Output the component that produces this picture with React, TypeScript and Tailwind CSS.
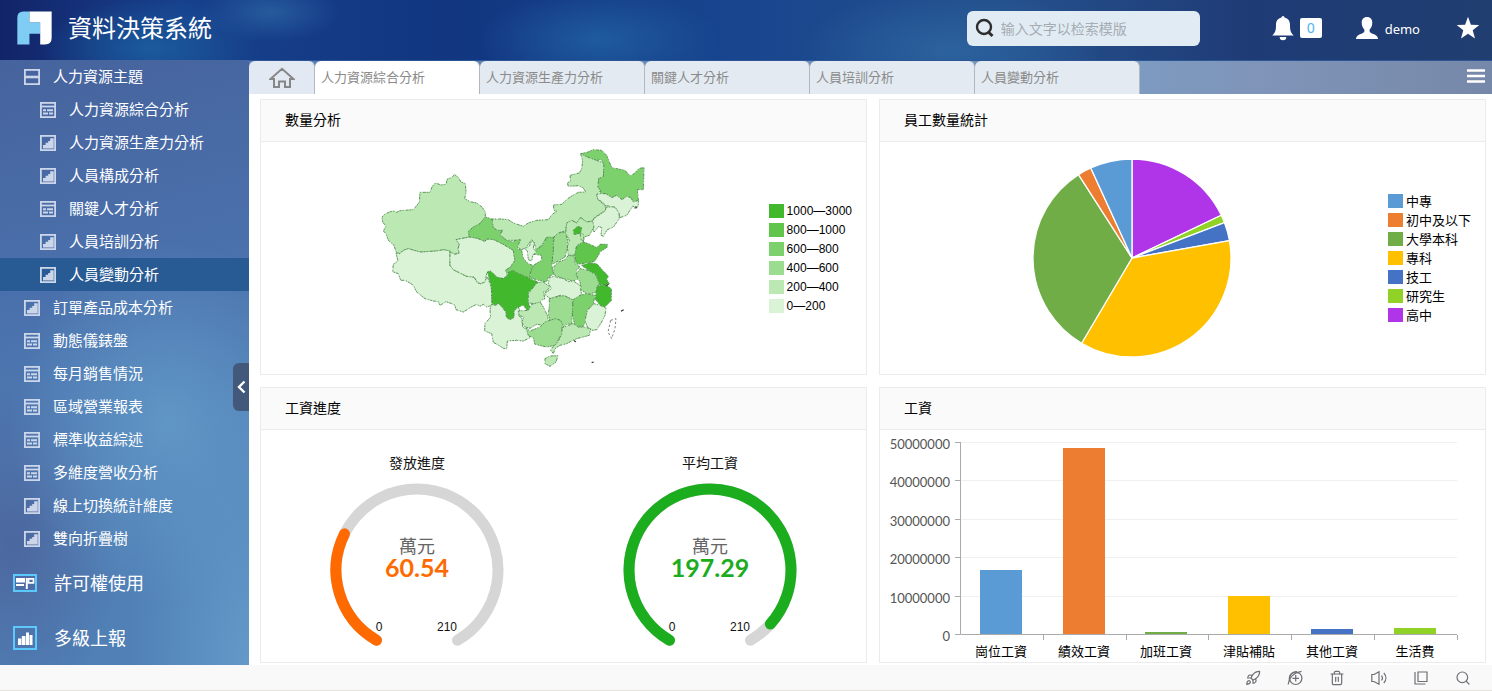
import React from 'react';
import { Rocket, Trash2, Search } from 'lucide-react';

type IconKind = 'folder' | 'report' | 'chart';

interface NavItem {
  label: string;
  icon: IconKind;
  nested?: boolean;
  active?: boolean;
}

const NAV: NavItem[] = [
  { label: '人力資源主題', icon: 'folder' },
  { label: '人力資源綜合分析', icon: 'report', nested: true },
  { label: '人力資源生產力分析', icon: 'chart', nested: true },
  { label: '人員構成分析', icon: 'chart', nested: true },
  { label: '關鍵人才分析', icon: 'report', nested: true },
  { label: '人員培訓分析', icon: 'chart', nested: true },
  { label: '人員變動分析', icon: 'chart', nested: true, active: true },
  { label: '訂單產品成本分析', icon: 'chart' },
  { label: '動態儀錶盤', icon: 'report' },
  { label: '每月銷售情況', icon: 'report' },
  { label: '區域營業報表', icon: 'report' },
  { label: '標準收益綜述', icon: 'report' },
  { label: '多維度營收分析', icon: 'report' },
  { label: '線上切換統計維度', icon: 'chart' },
  { label: '雙向折疊樹', icon: 'chart' },
];

const TABS = ['人力資源綜合分析', '人力資源生產力分析', '關鍵人才分析', '人員培訓分析', '人員變動分析'];

function NavIcon({ kind }: { kind: IconKind }) {
  return (
    <svg viewBox="0 0 16 16" className="h-4 w-4 shrink-0" fill="none" stroke="#cbd6ea" aria-hidden="true">
      <rect x="0.9" y="0.9" width="14.2" height="14.2" strokeWidth="1.800" />
      {kind === 'folder' && <path d="M1 8h14" strokeWidth="2.600" />}
      {kind === 'report' && (
        <>
          <path d="M1 4.500h14" strokeWidth="1.800" />
          <path d="M3 8.200h3M7 8.200h6M3 11.500h5M9 11.500h4" strokeWidth="2" />
        </>
      )}
      {kind === 'chart' && (
        <path d="M3 13.500V10h2.600V7.800h2.600V6h2V3.200h3.500v10.300z" fill="#cbd6ea" stroke="none" />
      )}
    </svg>
  );
}

function Sidebar() {
  return (
    <aside className="relative w-[249px] shrink-0 bg-[radial-gradient(ellipse_160px_180px_at_68%_60%,#6096c6_0%,rgba(91,143,194,0)_100%),radial-gradient(ellipse_110px_170px_at_5%_80%,#4c679f_0%,rgba(75,102,162,0)_100%),radial-gradient(ellipse_at_100%_100%,#6399c9_0%,rgba(96,150,198,0)_35%),linear-gradient(165deg,#46639d_0%,#4a70ab_35%,#5180b6_75%,#4f80b5_100%)]">
      <nav>
        <ul>
          {NAV.map((item) => (
            <li key={item.label}>
              <button
                type="button"
                className={`flex h-[33px] w-full items-center gap-[13px] text-left text-[15px] text-white ${item.nested ? 'pl-10' : 'pl-6'} ${item.active ? 'bg-[#285a94]' : ''}`}
              >
                <NavIcon kind={item.icon} />
                <span>{item.label}</span>
              </button>
            </li>
          ))}
          <li>
            <button type="button" className="flex h-[55px] w-full items-center gap-[17px] pl-[13px] text-left text-lg text-white">
              <svg viewBox="0 0 24 18" className="h-[18px] w-6" fill="none" aria-hidden="true">
                <rect x="1" y="1" width="22" height="16" stroke="#5cc8fb" strokeWidth="2" />
                <path d="M3 4h9v4.500H3zM3 10h8v2H3zM12.800 4h2v11h-2z" fill="#fff" />
                <path d="M15.500 4.800h5v4h-5z" stroke="#fff" strokeWidth="1.700" />
              </svg>
              <span className="pb-0.5">許可權使用</span>
            </button>
          </li>
          <li>
            <button type="button" className="flex h-[55px] w-full items-center gap-[17px] pl-[13px] text-left text-lg text-white">
              <svg viewBox="0 0 24 24" className="h-6 w-6" fill="none" aria-hidden="true">
                <rect x="1" y="1" width="22" height="22" stroke="#5cc8fb" strokeWidth="2" />
                <path d="M5 19v-6.500h3.300V19zM8.800 19v-9h3.700V19zM13 19V6.500h3V19zM16.500 19V9h3v10z" fill="#fff" />
              </svg>
              <span className="pb-0.5">多級上報</span>
            </button>
          </li>
        </ul>
      </nav>
      <button
        type="button"
        aria-label="收起"
        className="absolute top-[303px] right-0 flex h-12 w-4 items-center justify-center rounded-l-md bg-[#42597b]"
      >
        <svg viewBox="0 0 10 14" className="h-3.5 w-2.5" fill="none" stroke="#fff" strokeWidth="2.400" aria-hidden="true">
          <path d="M8.500 1.500L3 7l5.500 5.500" />
        </svg>
      </button>
    </aside>
  );
}

function Header() {
  return (
    <header className="flex h-[60px] items-center bg-[radial-gradient(ellipse_110px_50px_at_150px_48px,#1b5a9d_0%,rgba(27,90,157,0)_100%),radial-gradient(ellipse_70px_30px_at_270px_12px,#265a9c_0%,rgba(38,90,156,0)_100%),radial-gradient(ellipse_120px_50px_at_600px_40px,#1f5b9f_0%,rgba(31,91,159,0)_100%),radial-gradient(ellipse_150px_60px_at_950px_50px,#2b629e_0%,rgba(43,98,158,0)_100%),linear-gradient(90deg,#122468_0%,#17408c_12%,#123680_30%,#17448e_48%,#24508c_68%,#1f3b76_84%,#203e70_100%)] pr-3 pb-1 pl-[17px]">
      <svg viewBox="53 33 104 100" className="h-[34px] w-[35px]" aria-hidden="true">
        <path d="M54 132V52Q54 34 72 34H90V66H123V100H90V132Z" fill="#7fcdf5" />
        <path d="M90 34H156V112Q156 132 136 132H122V66H90Z" fill="#fff" />
      </svg>
      <h1 className="ml-4 pb-0.5 text-2xl text-white">資料決策系統</h1>
      <label className="ml-auto flex h-[35px] w-[233px] items-center gap-1.5 rounded-md bg-[#e1ebf4] pl-2">
        <svg viewBox="0 0 20 20" className="h-5 w-5 shrink-0" fill="none" stroke="#2d2d2d" aria-hidden="true">
          <circle cx="9" cy="9" r="7" strokeWidth="2.400" />
          <path d="M12.800 13.500l4.700 4.500" strokeWidth="3" />
        </svg>
        <input
          type="text"
          aria-label="搜索"
          placeholder="输入文字以检索模版"
          className="w-full min-w-0 bg-transparent font-['Noto_Sans_CJK_SC',sans-serif] text-sm outline-none placeholder:text-[#a6acb2]"
        />
      </label>
      <button type="button" aria-label="消息" className="ml-[72px] flex items-center gap-1.5">
        <svg viewBox="0 0 22 25" className="h-[25px] w-[22px]" fill="#fff" aria-hidden="true">
          <path d="M9.500 1.500a1.500 1.500 0 013 0c3.700.8 5.500 3.600 5.500 7.500 0 5 .5 7.500 3.800 10.500H.2C3.500 16.500 4 14 4 9c0-3.900 1.800-6.700 5.500-7.500z" />
          <path d="M7.700 21h6.600a3.300 3.300 0 01-6.600 0z" />
        </svg>
        <span className="flex h-5 w-[22px] items-center justify-center rounded-xs bg-white font-['Noto_Sans',sans-serif] text-sm text-[#47b5f5]">0</span>
      </button>
      <button type="button" className="ml-[34px] flex items-center gap-[7px] text-white">
        <svg viewBox="0 0 22 22" className="h-[22px] w-[22px]" fill="#fff" aria-hidden="true">
          <path d="M11 0c3.500 0 5.300 2.300 5.300 5.600 0 3-1.200 5.600-2.700 7.200-.3 2.300.5 3 3 4 3 1.200 4.800 2 5.400 4.700v.5H0v-.5c.6-2.700 2.400-3.500 5.400-4.700 2.500-1 3.300-1.700 3-4C6.900 11.200 5.700 8.600 5.700 5.600 5.700 2.300 7.500 0 11 0z" />
        </svg>
        <span className="pt-0.5 font-['Noto_Sans',sans-serif] text-[13px] leading-5">demo</span>
      </button>
      <button type="button" aria-label="收藏" className="ml-9">
        <svg viewBox="0 0 24 24" className="h-6 w-6" fill="#fff" aria-hidden="true">
          <path d="M12 .8l2.900 7.900 8.400.3-6.600 5.200 2.300 8.200L12 17.700l-7 4.700 2.300-8.200L.7 9l8.400-.3z" />
        </svg>
      </button>
    </header>
  );
}

function TabBar() {
  return (
    <div className="flex h-[34px] items-stretch border-t border-[#2b5796] bg-[linear-gradient(90deg,#5a7fb8_0%,#7d9ac0_72%,#7f94b8_82%,#7688a9_100%)] pr-[7px]">
      <button type="button" aria-label="首頁" className="flex w-[66px] items-center justify-center rounded-t-md border-r border-[#b3b8c0] bg-[#e2e9f2]">
        <svg viewBox="0 0 26 22" className="h-[22px] w-[26px]" fill="none" stroke="#878787" strokeWidth="2" aria-hidden="true">
          <path d="M1.500 12L13 1.800 24.500 12H21v8h-5v-5.500h-6V20H5v-8z" />
        </svg>
      </button>
      {TABS.map((tab, i) => (
        <button
          key={tab}
          type="button"
          className={`w-[165px] rounded-t-md border-r border-[#b3b8c0] pb-0.5 pl-1.5 text-left text-[13px] text-[#8a8a8a] ${i === 0 ? 'bg-white' : 'bg-[#e4eaf2]'}`}
        >
          {tab}
        </button>
      ))}
      <button type="button" aria-label="選單" className="ml-auto flex items-center pb-1">
        <svg viewBox="0 0 18 14" className="h-3.5 w-[18px]" stroke="#fff" strokeWidth="2.600" aria-hidden="true">
          <path d="M0 1.500h18M0 7h18M0 12.500h18" />
        </svg>
      </button>
    </div>
  );
}

function Card({ title, children }: { title: string; children: React.ReactNode }) {
  return (
    <section className="min-w-0 border border-[#ebebeb] bg-white">
      <h2 className="flex h-[42px] items-center border-b border-[#ebebeb] bg-[#fafafa] pb-1 pl-6 text-sm text-black">{title}</h2>
      <div className="flex h-[232px] items-center">{children}</div>
    </section>
  );
}

const G1 = '#42b92c';
const G2 = '#5fc54b';
const G3 = '#7dd16d';
const G4 = '#9cdc90';
const G5 = '#bce8b3';
const G6 = '#daf2d6';

const WEST: [string, string][] = [
  [G5, 'M36 230L44 222 60 214 72 212 80 216 90 211 130 208 140 196 148 185 150 156 180 156 186 140 196 128 214 134 228 132 232 116 244 112 254 103 266 112 272 124 286 130 288 155 284 175 300 184 320 188 336 200 346 215 346 230 330 250 310 262 296 272 298 290 258 298 268 312 264 326 268 338 252 342 240 332 220 328 200 332 150 335 130 330 115 325 100 330 90 340 78 335 72 315 55 300 48 280 40 272 48 258 38 245Z'],
  [G6, 'M78 338L90 340 100 330 115 325 150 335 200 332 220 328 240 332 240 375 250 388 290 408 312 410 322 428 332 430 345 422 352 410 364 440 366 495 350 500 340 492 330 498 320 492 300 502 280 515 258 508 255 495 245 490 228 484 210 495 205 484 190 482 165 475 140 455 130 435 120 428 105 420 92 420 85 400 68 394 70 372 84 362Z'],
  [G6, 'M258 298L298 290 320 293 345 303 350 296 370 297 400 312 430 330 435 360 420 382 408 388 412 405 400 415 375 410 358 392 350 400 345 425 332 430 322 425 312 410 290 408 250 388 240 375 240 335 254 342 268 338 264 326 268 312Z'],
  [G3, 'M346 230L366 236 372 262 384 270 398 270 390 283 410 300 430 305 440 297 452 297 450 315 442 325 455 330 460 355 475 370 490 376 480 400 480 414 455 412 430 390 420 402 405 390 420 382 435 360 430 330 400 312 370 297 350 296 345 303 320 293 298 290 296 272 310 260 330 250Z'],
  [G1, 'M352 395L362 392 380 410 400 415 412 405 415 396 430 390 445 400 460 405 480 415 504 425 495 450 475 455 475 490 484 505 470 508 460 495 445 500 432 512 432 532 420 538 408 530 408 515 395 500 385 488 378 496 366 490 364 440Z'],
  [G6, 'M364 492L378 496 385 488 395 500 408 515 408 530 420 538 432 532 432 512 445 500 450 512 445 525 456 535 458 560 475 572 480 592 460 602 440 600 412 602 410 626 400 624 388 616 370 606 365 580 344 572 345 550 362 530 360 508Z'],
];

const EAST: [string, string][] = [
  [G5, 'M-24 236L0 236 25 238 40 248 70 258 85 248 110 240 145 238 155 224 170 212 162 210 160 194 185 192 200 178 210 170 235 156 257 155 250 143 235 136 205 138 202 128 212 122 210 105 238 98 245 85 248 62 242 40 262 38 262 48 290 60 300 65 312 60 310 110 296 115 294 140 302 150 290 162 294 178 315 195 318 210 300 220 280 235 278 245 260 245 242 232 230 248 215 240 200 248 197 272 180 276 160 292 140 290 125 315 108 328 102 305 95 298 78 322 65 328 52 320 62 297 45 300 20 300 0 283 8 270 -8 270 -20 262Z'],
  [G3, 'M242 40L262 36 280 28 305 30 320 45 335 82 355 86 375 90 390 107 402 100 418 84 432 82 430 148 412 148 415 180 400 185 392 172 380 168 366 178 350 165 335 172 318 160 300 162 302 150 294 140 296 115 310 110 312 75 305 58 290 60 262 50Z'],
  [G6, 'M290 162L300 160 318 160 335 172 350 165 366 178 380 168 392 172 400 185 416 180 414 200 398 198 380 225 360 232 355 215 340 200 315 195 308 185 294 178Z'],
  [G6, 'M318 200L345 200 357 218 358 235 340 260 322 268 310 288 303 285 305 262 296 258 282 275 275 248 282 235 300 222 316 212Z'],
  [G5, 'M200 248L215 240 230 248 242 232 260 245 278 242 282 260 268 285 252 290 250 305 230 315 225 345 205 345 202 320 208 300 197 278Z'],
  [G1, 'M220 270L232 258 245 262 242 278 222 283Z'],
  [G5, 'M240 277L250 282 252 300 244 300Z'],
  [G2, 'M224 345L230 318 250 305 270 312 290 322 300 312 322 312 322 320 300 335 285 362 260 368 230 372Z'],
  [G4, 'M162 290L175 278 195 275 203 300 202 325 195 350 175 362 155 372 160 330Z'],
  [G3, 'M140 292L160 290 160 330 155 372 160 402 145 410 140 425 115 420 90 412 92 395 100 375 125 360 125 345 102 342 102 332 125 318Z'],
  [G6, 'M95 300L102 305 100 325 110 335 98 345 95 362 85 358 82 332 74 325 88 318Z'],
  [G4, 'M162 378L175 365 195 358 205 345 225 348 225 370 240 380 228 390 235 415 220 422 190 415 160 402Z'],
  [G1, 'M245 375L270 367 290 370 310 392 325 408 320 418 328 430 310 435 292 430 290 405 265 390Z'],
  [G4, 'M240 385L265 390 288 405 298 432 290 442 292 455 262 462 245 450 240 425 228 402Z'],
  [G1, 'M292 437L315 432 334 445 334 480 315 500 300 495 285 475Z'],
  [G6, 'M148 412L162 408 190 415 205 424 220 422 240 435 245 465 230 475 215 478 195 467 180 465 150 475 132 460 155 445 145 430Z'],
  [G5, 'M110 428L130 425 150 440 140 452 130 455 135 475 122 480 120 492 85 488 85 460Z'],
  [G5, 'M55 512L85 510 95 492 120 485 130 500 142 525 145 545 130 555 110 552 90 564 75 560 65 545 72 530 58 526Z'],
  [G4, 'M148 475L180 467 195 467 217 478 218 510 215 550 200 552 190 560 180 540 165 535 150 545 145 520 148 500Z'],
  [G3, 'M220 478L240 465 260 460 285 465 280 490 262 510 256 545 250 558 225 558 217 520Z'],
  [G6, 'M282 490L300 495 318 502 315 525 305 545 290 568 275 570 262 560 255 540 262 510Z'],
  [G4, 'M78 562L90 572 120 560 135 545 165 535 182 540 187 552 185 580 165 615 140 620 105 612 100 592 85 586Z'],
  [G5, 'M187 562L220 550 235 560 250 560 272 565 268 585 230 595 215 602 200 610 180 615 165 625 160 640 152 630 158 620 172 608 185 582Z'],
  [G5, 'M135 655L150 647 174 646 168 665 150 678 135 670Z'],
];

function Region({ fill, d }: { fill: string; d: string }) {
  return (
    <>
      <path d={d} fill={fill} stroke="#8bc983" strokeWidth="1.500" />
      <path d={d} fill="none" stroke="#3c6f40" strokeWidth="2" strokeDasharray="5 4 3 7 8 3" />
    </>
  );
}

function ChinaMap() {
  return (
    <svg viewBox="0 8 870 690" className="h-[230px] w-[290px]" role="img" aria-label="數量分析地圖" strokeLinejoin="round">
      {WEST.map(([fill, d]) => (
        <Region key={d} fill={fill} d={d} />
      ))}
      <g transform="translate(390 0)">
        {EAST.map(([fill, d]) => (
          <Region key={d} fill={fill} d={d} />
        ))}
        <path d="M332 540L348 535 345 565 335 595 324 575Z" fill="#fff" stroke="#444" strokeWidth="2" strokeDasharray="7 6" />
        <path d="M363 513l8-5M275 667l6-2M222 600l5 5M403 203l8-1M318 436l8-4" stroke="#333" strokeWidth="3.500" />
      </g>
    </svg>
  );
}

const MAP_LEGEND = [
  { label: '1000—3000', swatch: 'bg-[#42b92c]' },
  { label: '800—1000', swatch: 'bg-[#5fc54b]' },
  { label: '600—800', swatch: 'bg-[#7dd16d]' },
  { label: '400—600', swatch: 'bg-[#9cdc90]' },
  { label: '200—400', swatch: 'bg-[#bce8b3]' },
  { label: '0—200', swatch: 'bg-[#daf2d6]' },
];

const PIE_LEGEND = [
  { label: '中專', swatch: 'bg-[#5b9bd5]' },
  { label: '初中及以下', swatch: 'bg-[#ed7d31]' },
  { label: '大學本科', swatch: 'bg-[#70ad47]' },
  { label: '專科', swatch: 'bg-[#ffc000]' },
  { label: '技工', swatch: 'bg-[#4472c4]' },
  { label: '研究生', swatch: 'bg-[#90d226]' },
  { label: '高中', swatch: 'bg-[#b135e8]' },
];

function Legend({ items, text }: { items: { label: string; swatch: string }[]; text: string }) {
  return (
    <ul className={`pr-3.5 text-black ${text}`}>
      {items.map((item) => (
        <li key={item.label} className="flex h-[19px] items-center gap-[3px] whitespace-nowrap">
          <span className={`h-3.5 w-[15px] ${item.swatch}`} />
          {item.label}
        </li>
      ))}
    </ul>
  );
}

/* Slice boundaries in degrees, clockwise from twelve o'clock. */
const SLICES: [string, number, number][] = [
  ['#b135e8', 0, 64.4],
  ['#90d226', 64.4, 69],
  ['#4472c4', 69, 79.9],
  ['#ffc000', 79.9, 210.6],
  ['#70ad47', 210.6, 327.3],
  ['#ed7d31', 327.3, 335.4],
  ['#5b9bd5', 335.4, 360],
];

function polar(cx: number, cy: number, r: number, deg: number) {
  const a = (deg * Math.PI) / 180;
  return `${(cx + r * Math.sin(a)).toFixed(2)} ${(cy - r * Math.cos(a)).toFixed(2)}`;
}

function PieChart() {
  return (
    <svg viewBox="0 0 200 200" className="h-[200px] w-[200px]" role="img" aria-label="員工數量統計圓餅圖">
      {SLICES.map(([fill, from, to]) => (
        <path
          key={fill}
          d={`M100 100L${polar(100, 100, 99, from)}A99 99 0 ${to - from > 180 ? 1 : 0} 1 ${polar(100, 100, 99, to)}Z`}
          fill={fill}
          stroke="#fff"
          strokeWidth="1.300"
          strokeLinejoin="round"
        />
      ))}
    </svg>
  );
}

interface GaugeProps {
  cx: number;
  title: string;
  value: number;
  color: string;
}

function Gauge({ cx, title, value, color }: GaugeProps) {
  const cy = 140;
  const r = 81;
  const sweep = (value / 210) * 300;
  return (
    <g textAnchor="middle">
      <text x={cx} y="38" fontSize="14" fill="#111">{title}</text>
      <g fill="none" strokeWidth="11" strokeLinecap="round">
        <path d={`M${polar(cx, cy, r, 210)}A${r} ${r} 0 1 1 ${polar(cx, cy, r, 150)}`} stroke="#d6d6d6" />
        <path d={`M${polar(cx, cy, r, 210)}A${r} ${r} 0 ${sweep > 180 ? 1 : 0} 1 ${polar(cx, cy, r, 210 + sweep)}`} stroke={color} />
      </g>
      <text>
        <tspan x={cx} y="123" fontSize="18" fill="#666">萬元</tspan>
        <tspan x={cx} y="147" fontSize="25" fill={color} className="font-['Lato',sans-serif] font-bold">{value}</tspan>
      </text>
      <g fontSize="12" fill="#111" className="font-['Liberation_Sans',sans-serif]">
        <text x={cx - 38} y="201">0</text>
        <text x={cx + 30} y="201">210</text>
      </g>
    </g>
  );
}

function Gauges() {
  return (
    <svg viewBox="0 0 605 232" className="h-full w-full" role="img" aria-label="工資進度">
      <Gauge cx={156} title="發放進度" value={60.54} color="#fe6a00" />
      <Gauge cx={449} title="平均工資" value={197.29} color="#1cad1f" />
    </svg>
  );
}

const BARS = [
  { label: '崗位工資', height: 64, color: '#5b9bd5' },
  { label: '績效工資', height: 186, color: '#ed7d31' },
  { label: '加班工資', height: 2, color: '#70ad47' },
  { label: '津貼補貼', height: 38, color: '#ffc000' },
  { label: '其他工資', height: 5, color: '#4472c4' },
  { label: '生活費', height: 6, color: '#90d226' },
];

const TICKS = ['50000000', '40000000', '30000000', '20000000', '10000000', '0'];
const TICK_Y = [12, 50, 89, 127, 166, 204];

function BarChart() {
  return (
    <svg viewBox="0 0 605 232" className="h-full w-full" role="img" aria-label="工資長條圖">
      {TICKS.map((tick, i) => (
        <g key={tick}>
          {i < 5 && <path d={`M81 ${TICK_Y[i]}.500H577`} stroke="#f0f0f0" />}
          <path d={`M75 ${TICK_Y[i]}.500H80`} stroke="#aaa" />
          <text x="70" y={TICK_Y[i] + 7} fontSize="13" textAnchor="end" fill="#555" className="font-['Lato',sans-serif]">{tick}</text>
        </g>
      ))}
      {BARS.map((bar, i) => (
        <g key={bar.label}>
          <rect x={100 + Math.round(i * 82.700)} y={204 - bar.height} width="42" height={bar.height} fill={bar.color} />
          <path d={`M${80 + Math.round((i + 1) * 82.800)}.500 205v5`} stroke="#aaa" />
          <text x={121 + Math.round(i * 82.700)} y="226" fontSize="13" textAnchor="middle" fill="#000">{bar.label}</text>
        </g>
      ))}
      <path d="M80.500 12V204.500H577" fill="none" stroke="#aaa" />
    </svg>
  );
}

function Footer() {
  const button = 'flex w-[42px] items-center justify-center';
  const stroke = { fill: 'none', stroke: 'currentColor', strokeWidth: 1.2 };
  return (
    <footer className="flex h-[26px] items-stretch justify-end border-b border-[#e6e6df] bg-[#f9f9f9] pr-2 text-[#6f6f76]">
      <button type="button" aria-label="加速" className={button}>
        <Rocket className="h-4 w-4" strokeWidth={1.800} />
      </button>
      <button type="button" aria-label="瀏覽模式" className={button}>
        <svg viewBox="0 0 16 16" className="h-4 w-4" {...stroke} aria-hidden="true">
          <circle cx="8.700" cy="8.300" r="6.200" />
          <path d="M1.200 14.500C2 8 6.500 2.500 14.500 1.300M2.500 11C1.500 5.500 5 1.500 10 1.500M8.700 5v6.500M5.500 8.300h6.500" />
        </svg>
      </button>
      <button type="button" aria-label="清除" className={button}>
        <Trash2 className="h-4 w-4" strokeWidth={1.800} />
      </button>
      <button type="button" aria-label="聲音" className={button}>
        <svg viewBox="0 0 18 16" className="h-4 w-[18px]" {...stroke} aria-hidden="true">
          <path d="M4 4.500L9 1.800v12.400L4 11.500H1.800v-7zM11.500 5.500c1.200 1.500 1.200 3.500 0 5M13.800 3c2.800 3 2.800 7 0 10" />
        </svg>
      </button>
      <button type="button" aria-label="視窗" className={button}>
        <svg viewBox="0 0 16 16" className="h-4 w-4" {...stroke} aria-hidden="true">
          <path d="M5 2h9v9.500H5zM2 2v12h10.500" />
        </svg>
      </button>
      <button type="button" aria-label="縮放" className={button}>
        <Search className="h-4 w-4" strokeWidth={1.800} />
      </button>
    </footer>
  );
}

export default function App() {
  return (
    <div className="flex min-h-screen flex-col bg-white font-['Noto_Sans_CJK_TC','Noto_Sans_CJK_SC',sans-serif]">
      <Header />
      <div className="flex flex-1">
        <Sidebar />
        <div className="flex min-w-0 flex-1 flex-col">
          <TabBar />
          <main className="grid grid-cols-2 gap-3 pt-[5px] pr-1.5 pl-[11px]">
            <Card title="數量分析">
              <div className="flex flex-1 justify-center">
                <ChinaMap />
              </div>
              <Legend items={MAP_LEGEND} text="font-['Liberation_Sans',sans-serif] text-xs" />
            </Card>
            <Card title="員工數量統計">
              <div className="flex flex-1 justify-center pr-1">
                <PieChart />
              </div>
              <Legend items={PIE_LEGEND} text="text-[13px]" />
            </Card>
            <Card title="工資進度">
              <Gauges />
            </Card>
            <Card title="工資">
              <BarChart />
            </Card>
          </main>
        </div>
      </div>
      <Footer />
    </div>
  );
}
